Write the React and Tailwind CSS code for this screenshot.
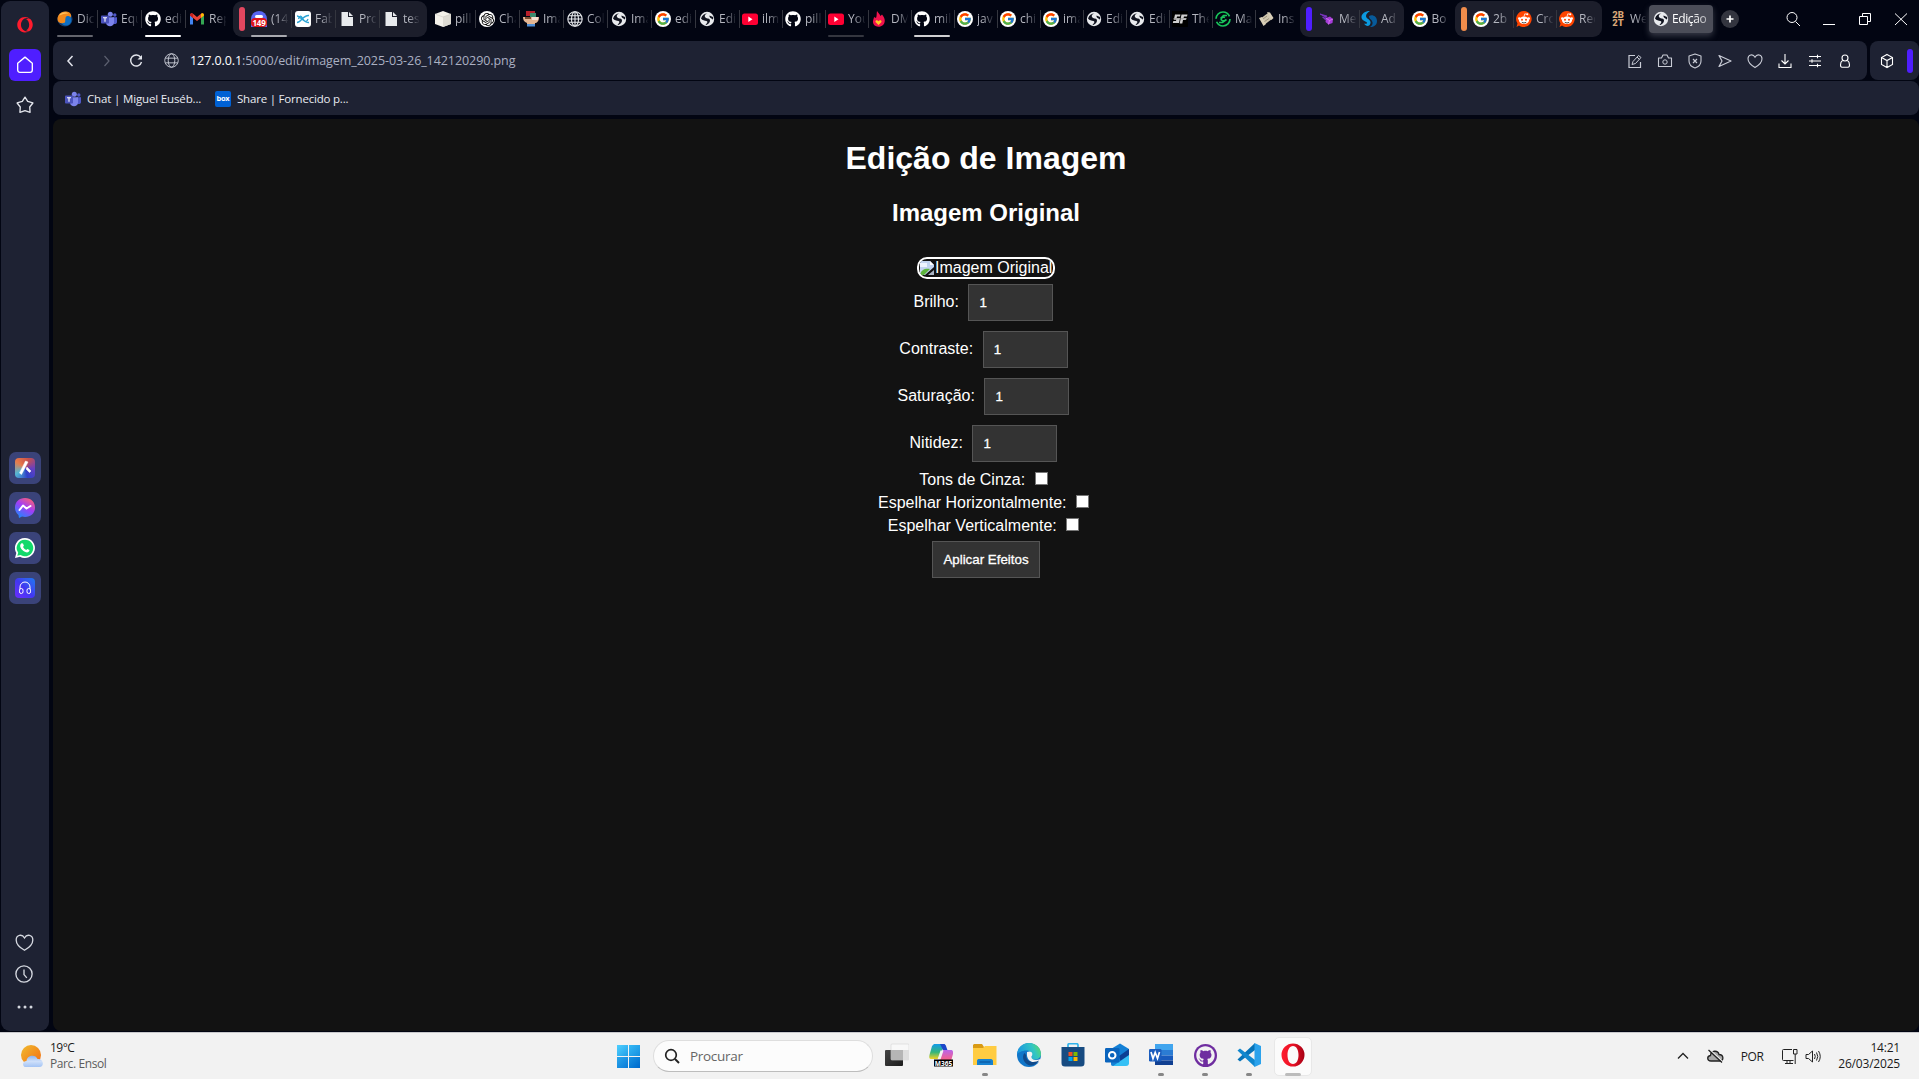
import React from "react";
import { FaGithub, FaOpera } from "react-icons/fa";
import { FcGoogle } from "react-icons/fc";
import { SiOpenai } from "react-icons/si";

const Svg = ({ s = 16, box = 16, children, className = "" }) => (
  <svg width={s} height={s} viewBox={`0 0 ${box} ${box}`} fill="none" className={`shrink-0 ${className}`}>
    {children}
  </svg>
);

/* ---------- favicons ---------- */
const Firefoxish = () => (
  <Svg>
    <circle cx="8" cy="8" r="7.6" fill="#123a6b" />
    <circle cx="9" cy="9" r="5.5" fill="#0d6fc4" />
    <path d="M0.5 8C0.5 3 5 0 9 0.5C14 1 15 4.500 13.500 6.500C12 4.500 9 4.500 8.500 7C8 10 8.500 10 8 11.500C5 13 0.500 12.500 0.500 8Z" fill="#f28a1d" />
    <path d="M2 4.500C4.500 1 9 .5 11.500 2.500C8 2 4.500 3.500 2 4.500Z" fill="#ffc15a" />
  </Svg>
);
const Teams = () => (
  <Svg>
    <circle cx="9.3" cy="3.3" r="2.5" fill="#7b83eb" />
    <circle cx="13.8" cy="4" r="1.7" fill="#5059c9" />
    <path d="M11.5 6.3H16V11C16 13 13.5 13.6 12 12.5Z" fill="#5059c9" />
    <path d="M5 6.3H13V11.5C13 16.5 5 16.5 5 11.5Z" fill="#7b83eb" />
    <rect y="4.5" width="8" height="8" rx=".8" fill="#4b53bc" />
    <path d="M2 6.7H6M4 6.7V10.8" stroke="#fff" strokeWidth="1.1" />
  </Svg>
);
const Github = () => <FaGithub className="size-4 shrink-0 text-white" />;
const Gmail = () => (
  <Svg>
    <path d="M1 4V13.5H4V7" fill="#4285f4" />
    <path d="M12 7V13.5H15V4" fill="#34a853" />
    <path d="M1 4.5C1 2 3 2 4 2.8L8 6L12 2.8C13 2 15 2 15 4.5L8 10Z" fill="#ea4335" />
    <path d="M12 2.8C13 2 15 2 15 4.5L12 7Z" fill="#fbbc04" />
    <path d="M1 4.5C1 3 2 2 4 2.8V7Z" fill="#c5221f" />
  </Svg>
);
const Discord = () => (
  <span className="flex size-4 shrink-0 flex-col items-center justify-end rounded-t-full bg-[#5865f2]">
    <span className="h-[3px] w-2 rounded bg-white" />
    <span className="flex h-[9px] w-4 items-center justify-center rounded-[4px] bg-[#e0151b] font-['Open_Sans',sans-serif] text-[8px] font-bold leading-none tracking-[-0.2px] text-white">149</span>
  </span>
);
const Fabric = () => (
  <Svg>
    <rect width="16" height="16" rx="3" fill="#fff" />
    <path d="M2 5C5 4.500 9 12 14 11.500M2 11.500C6 11.500 8 4 14 4.500M3.500 8C5 4 6 4.500 8 8S12 11 13 8" stroke="#2ba3d4" strokeWidth="1.300" />
  </Svg>
);
const Doc = () => (
  <Svg>
    <path d="M2.500 1H9V6H14V15H2.500Z" fill="#e8eaed" />
    <path d="M10 1L14 5H10Z" fill="#e8eaed" />
  </Svg>
);
const Box3d = () => (
  <Svg>
    <path d="M8 0L16 3V13L8 16L0 13V3Z" fill="#f3f1ea" />
    <path d="M8 6L16 3V13L8 16Z" fill="#dddbd3" />
    <path d="M0 3L8 6L16 3" stroke="#c5c3bc" strokeWidth=".5" />
  </Svg>
);
const Gpt = () => (
  <span className="grid size-4 shrink-0 place-items-center rounded-full bg-white">
    <SiOpenai className="size-[13px] text-black" />
  </span>
);
const Bath = () => (
  <Svg>
    <path d="M3 0H12V5H3Z" fill="#b8202b" />
    <path d="M7 2H13V6H7Z" fill="#3d8b6e" />
    <path d="M0 6H16C16 10 14 12 12 12V15H4V12C1 11 0 9 0 6Z" fill="#e3b592" />
    <path d="M2 6H8V8H2Z" fill="#7a4a2e" />
    <path d="M9 6H15V9H9Z" fill="#f5dfd0" />
    <path d="M4 13H12V15.500H4Z" fill="#4f8fd6" />
  </Svg>
);
const Grid = ({ s = 16, w = 1.1, c = "#e8eaed" }) => (
  <Svg s={s}>
    <circle cx="8" cy="8" r="7.2" stroke={c} strokeWidth={w} />
    <ellipse cx="8" cy="8" rx="3.500" ry="7.200" stroke={c} strokeWidth={w} />
    <path d="M1 8H15M2 4.800H14M2 11.200H14M8 1V15" stroke={c} strokeWidth={w} />
  </Svg>
);
const UrlGlobe = () => (
  <Svg s={15}>
    <circle cx="8" cy="8" r="7.2" stroke="#c9ccd6" />
    <ellipse cx="8" cy="8" rx="3.500" ry="7.200" stroke="#c9ccd6" />
    <path d="M1.500 5.500H14.500M1.500 10.500H14.500" stroke="#c9ccd6" />
  </Svg>
);
const Globe = () => (
  <Svg>
    <circle cx="8" cy="8" r="7.2" fill="#e8eaed" />
    <path d="M8.500 2.500C6 3 5 5 6.500 6.500C8 8 10.500 7 11 9C11.300 11 9.500 13 7.500 14L6.500 13.500C8.500 12 9 10.500 7.500 10C5.500 9.500 3.500 9.500 2 7.500C3 4 5.500 2.500 8.500 2.500ZM10.500 4.500L14 6C14.500 8 14 9 13 8C12 7 10 6.500 10.500 4.500Z" fill="#10131f" />
  </Svg>
);
const Google = () => (
  <span className="grid size-4 shrink-0 place-items-center rounded-full bg-white">
    <FcGoogle className="size-[14px]" />
  </span>
);
const Youtube = () => (
  <Svg>
    <rect y="2.500" width="16" height="11.500" rx="2.500" fill="#f03" />
    <path d="M6.300 5.500L10.500 8.200L6.300 10.900Z" fill="#fff" />
  </Svg>
);
const Flame = () => (
  <Svg>
    <path d="M6 0C7 2 9 3 9.500 5L11 3.500C15 8 14 12 12 14C9 17 4 16 2.500 13C1 10 3 8 3 6L5 7C6 4.500 5.500 2.500 6 0Z" fill="#f0134d" />
    <path d="M7.500 14L4.500 11C4 9 6.500 8.500 7.500 10.200C8.500 8.500 11 9 10.500 11Z" fill="#ffc928" />
  </Svg>
);
const Sf = () => (
  <Svg>
    <rect width="16" height="16" fill="#000" />
    <path d="M3 3.500H8.500L8 5.500H5L4.700 7H8L7 12H.8L1.300 10H4L4.300 8.800H1.800ZM9.500 3.500H15.500L15 5.500H12L11.600 7H14.300L13.800 9H11L10.300 12.500H7.700Z" fill="#cfcfcf" />
    <path d="M1 7.800H15" stroke="#888" strokeWidth=".7" />
  </Svg>
);
const GreenSwirl = () => (
  <Svg>
    <circle cx="8" cy="8" r="7" stroke="#19c55b" strokeWidth="1.700" strokeDasharray="19 3" />
    <path d="M12 4.500L8.500 4.500L5.500 7.500M4 11.500H7.500L11.500 8.500M6 8C6 10 9 10 10 9.500M10 6.500C8.500 5.500 7 6.500 6 8" stroke="#19c55b" strokeWidth="1.600" />
  </Svg>
);
const Scroll = () => (
  <Svg>
    <path d="M2 8L10 2L14 8L6 14Z" fill="#cfc5ae" />
    <path d="M1 7L4 6L8 13L5.500 15ZM9 1L12 1.500L15.500 7L13.500 9Z" fill="#d9cfb8" />
    <path d="M5 8L9 5M6.500 10.500L11 7.500" stroke="#8f8570" strokeWidth=".8" />
  </Svg>
);
const Meteor = () => (
  <Svg>
    <path d="M7 7L11 5.500L14 8L13.500 12L9.500 13.500L6.500 11Z" fill="#a63bd8" />
    <path d="M1 3L8 5L7 6.500ZM3.500 6L7 7.500L6.500 9Z" fill="#7d35c7" stroke="#7d35c7" strokeWidth=".8" />
    <path d="M7 7L10.500 9.500L14 8M10.500 9.500L9.500 13.500" stroke="#e08af5" strokeWidth=".7" />
  </Svg>
);
const Swirl = () => (
  <Svg>
    <path d="M9 0C3 0-1 4 1 8C3 11 6 10 6 12C6 13 4 13 3 12.500C5 16 9 15.500 9.500 12C10 8 5 8 5 5C5 3 7 1 9 0Z" fill="#0b9ae0" />
    <path d="M8 5C11 3 16 5 16 10C16 14 13 16 9 16C12 14 12 12 11 10C10 8 8 8 8 5Z" fill="#075b9b" />
  </Svg>
);
const Reddit = () => (
  <Svg>
    <path d="M8 0A8 8 0 1 1 3 14.500L.5 16L1.500 12.500A8 8 0 0 1 8 0Z" fill="#ff4500" />
    <ellipse cx="8" cy="9.300" rx="5" ry="3.700" fill="#fff" />
    <circle cx="3.300" cy="7.500" r="1.300" fill="#fff" />
    <circle cx="12.700" cy="7.500" r="1.300" fill="#fff" />
    <circle cx="6" cy="8.700" r="1" fill="#ff4500" />
    <circle cx="10" cy="8.700" r="1" fill="#ff4500" />
    <path d="M5.800 11.300Q8 12.700 10.200 11.300" stroke="#222" strokeWidth=".8" />
    <path d="M8 5.600L8.800 2.800L11 3.300" stroke="#fff" strokeWidth=".8" />
    <circle cx="11.300" cy="3.300" r="1" fill="#fff" />
  </Svg>
);
const TwoB = () => (
  <span className="flex size-4 shrink-0 flex-col items-center justify-center font-['Roboto',sans-serif] text-[9.5px] font-black leading-[8px] text-[#d7a676]">
    <span>2B</span>
    <span>2T</span>
  </span>
);

/* ---------- tabs ---------- */
const fade = "[mask-image:linear-gradient(to_right,black_35%,transparent_105%)]";

function Tab({ icon: Icon, text, w = "w-[43px]", line, sep = true }) {
  return (
    <div className={`relative flex h-9 shrink-0 items-center ${w}`}>
      <Icon />
      <span className={`ml-1 w-[17px] overflow-hidden whitespace-nowrap text-[12px] leading-4 text-[#b4b6bf] ${fade}`}>{text}</span>
      {sep && <span className="ml-[2.5px] h-[18px] w-px shrink-0 bg-[#34363f]" />}
      {line && <span className={`absolute bottom-0 left-0 h-[2px] w-9 rounded-sm ${line}`} />}
    </div>
  );
}

const middle = [
  [Box3d, "pill"], [Gpt, "Cha"], [Bath, "Ima"], [Grid, "Col"], [Globe, "Ima"], [Google, "edi"], [Globe, "Edi"],
  [Youtube, "ilm"], [Github, "pill"], [Youtube, "You", "bg-[#34363f]"], [Flame, "DM"], [Github, "mil", "bg-[#d0d0d2]"],
  [Google, "jav"], [Google, "chi"], [Google, "ima"], [Globe, "Edi"], [Globe, "Edi"], [Sf, "The"], [GreenSwirl, "Ma"], [Scroll, "Ins"],
];

function TabStrip() {
  return (
    <div className="flex h-[41px] pt-px">
      <div className="flex w-[184px] shrink-0 pl-1">
        <Tab w="w-11" icon={Firefoxish} text="Dic" line="bg-[#63656d]" />
        <Tab w="w-11" icon={Teams} text="Equ" />
        <Tab w="w-11" icon={Github} text="edi" line="bg-white" />
        <Tab w="w-11" icon={Gmail} text="Rep" sep={false} />
      </div>
      <div className="-ml-[4px] mr-2 flex h-9 w-[194px] shrink-0 items-center rounded-[9px] bg-[#1c1e2b] pl-1.5">
        <span className="mr-1.5 h-6 w-1.5 shrink-0 rounded-full bg-[#e2475f]" />
        <Tab w="w-11" icon={Discord} text="(14" line="bg-[#a9aab0]" />
        <Tab w="w-11" icon={Fabric} text="Fab" />
        <Tab w="w-11" icon={Doc} text="Pro" />
        <Tab w="w-9" icon={Doc} text="tes" sep={false} />
      </div>
      <div className="flex w-[865px] shrink-0">
        {middle.map(([icon, text, line], i) => (
          <Tab key={i} icon={icon} text={text} line={line} w={i < 6 ? "w-11" : "w-[43px]"} sep={i < 19} />
        ))}
      </div>
      <div className="flex h-9 w-[104px] shrink-0 items-center rounded-[9px] bg-[#1c1e2b] pl-1.5">
        <span className="mr-[7px] h-6 w-1.5 shrink-0 rounded-full bg-[#4f1eff]" />
        <Tab w="w-[42px]" icon={Meteor} text="Me" />
        <Tab w="w-9" icon={Swirl} text="Ad" sep={false} />
      </div>
      <div className="ml-[7.5px] w-[43.5px] shrink-0">
        <Tab w="w-10" icon={Google} text="Bo" sep={false} />
      </div>
      <div className="flex h-9 w-[147px] shrink-0 items-center rounded-[9px] bg-[#1c1e2b] pl-1.5">
        <span className="mr-1.5 h-6 w-1.5 shrink-0 rounded-full bg-[#f08c4b]" />
        <Tab w="w-[43px]" icon={Google} text="2b" />
        <Tab w="w-[43px]" icon={Reddit} text="Cro" />
        <Tab w="w-9" icon={Reddit} text="Red" sep={false} />
      </div>
      <div className="ml-2 w-[39px] shrink-0">
        <Tab w="w-9" icon={TwoB} text="We" sep={false} />
      </div>
      <div className="mt-1 flex h-7 w-16 shrink-0 items-center rounded-[4px] bg-[#4b4d58] pl-1 shadow-[0_3px_6px_rgba(120,122,135,0.45)]">
        <Globe />
        <span className="ml-[3px] w-9 overflow-hidden whitespace-nowrap text-[12px] leading-4 tracking-[-0.4px] text-white [mask-image:linear-gradient(to_right,black_60%,rgba(0,0,0,0.5))]">Edição</span>
      </div>
      <div className="ml-2 mt-[9px] grid size-[18px] shrink-0 place-items-center rounded-full bg-[#33353f]">
        <Svg s={10} box={10}><path d="M5 1.500V8.500M1.500 5H8.500" stroke="#fff" strokeWidth="1.700" /></Svg>
      </div>
      <div className="ml-[46px] flex h-9 items-center gap-5 text-white">
        <Svg><circle cx="7" cy="6.500" r="5" stroke="currentColor" /><path d="M10.500 10.500L15 15" stroke="currentColor" /></Svg>
        <Svg><path d="M2 13.500H14" stroke="currentColor" /></Svg>
        <Svg><path d="M2.500 5.500H10.500V13.500H2.500ZM5.500 5.500V2.500H13.500V10.500H10.500" stroke="currentColor" /></Svg>
        <Svg><path d="M2 2.500L14 14M14 2.500L2 14" stroke="currentColor" /></Svg>
      </div>
    </div>
  );
}

/* ---------- toolbar ---------- */
const Heart = ({ s = 16 }) => (
  <Svg s={s}><path d="M8 14.500C5 12.800 1 9.500 1 5.800C1 1.500 6 .5 8 4.200C10 .5 15 1.500 15 5.800C15 9.500 11 12.800 8 14.500Z" stroke="currentColor" strokeWidth="1.100" /></Svg>
);

function Toolbar() {
  return (
    <div className="flex h-[39px] gap-[3px]">
      <div className="flex flex-1 items-center rounded-[8px] bg-[#1e2233] text-[#e3e5ec]">
        <Svg className="ml-[9px]"><path d="M10.500 3L6 8L10.500 13" stroke="currentColor" strokeWidth="1.500" /></Svg>
        <Svg className="ml-[21px] text-[#5c6070]"><path d="M5.500 3L10 8L5.500 13" stroke="currentColor" strokeWidth="1.200" /></Svg>
        <Svg className="ml-[13px]"><path d="M12.700 4.300A5.500 5.500 0 1 0 13.500 9" stroke="currentColor" strokeWidth="1.400" /><path d="M14 2V6.500H9.500Z" fill="currentColor" /></Svg>
        <span className="ml-5 flex"><UrlGlobe /></span>
        <span className="ml-[11px] mt-px whitespace-nowrap text-[12.5px] tracking-[-0.07px] text-[#abb0c2]"><span className="text-white">127.0.0.1</span>:5000/edit/imagem_2025-03-26_142120290.png</span>
        <div className="ml-auto mr-[14px] flex gap-[14px] text-[#c9ccd6]">
          <Svg><path d="M8 2.500H2V14.500H13.500V9" stroke="currentColor" strokeWidth="1.200" /><path d="M5 11.500L6 8.500L11.500 2.500L14 4.500L8.500 10.500ZM10 4L12.500 6.500" stroke="currentColor" /></Svg>
          <Svg><path d="M1.500 5H4.500L6 2H10L11.500 5H14.500V13.500H1.500Z" stroke="currentColor" strokeWidth="1.100" strokeLinejoin="round" /><circle cx="8" cy="9" r="2.200" stroke="currentColor" /></Svg>
          <Svg><path d="M8 1L14 3V8C14 12 11 14 8 15C5 14 2 12 2 8V3Z" stroke="currentColor" strokeWidth="1.100" strokeLinejoin="round" /><path d="M6 6L10 10M10 6L6 10" stroke="currentColor" strokeWidth="1.200" /></Svg>
          <Svg><path d="M2 2.500L14 8L2 13.500L5 8Z" stroke="currentColor" strokeWidth="1.200" strokeLinejoin="round" /></Svg>
          <Heart />
          <Svg className="text-white"><path d="M8 1V10.500M4.500 7.500L8 11L11.500 7.500M2 10.500V14.500H14V10.500" stroke="currentColor" strokeWidth="1.100" /></Svg>
          <Svg className="text-white"><path d="M2 3.500H14M2 8H14M2 12.500H14M10.500 1.800V5.200M5 6.300V9.700M10.500 10.800V14.200" stroke="currentColor" strokeWidth="1.100" /></Svg>
          <Svg className="text-white"><circle cx="8" cy="5" r="3" stroke="currentColor" strokeWidth="1.100" /><path d="M5.500 7.500C3.800 8.500 3.500 10 3.500 12C3.500 13.500 4 14.200 5 14.200H11C12 14.200 12.500 13.500 12.500 12C12.500 10 12.200 8.500 10.500 7.500" stroke="currentColor" strokeWidth="1.100" /></Svg>
        </div>
      </div>
      <div className="flex w-[49px] items-center rounded-[8px] bg-[#1e2233] pl-[9px] text-white">
        <Svg><path d="M8 1.500L13.500 4.500V11.500L8 14.500L2.500 11.500V4.500ZM2.500 4.500L8 7.500L13.500 4.500M8 7.500V14.500" stroke="currentColor" strokeWidth="1.100" /></Svg>
        <span className="ml-3 h-6 w-1.5 rounded-full bg-[#4f1eff]" />
      </div>
    </div>
  );
}

/* ---------- sidebar ---------- */
const Tile = ({ children }) => <div className="grid size-8 place-items-center rounded-[7px] bg-[#3a4379]">{children}</div>;

function Sidebar() {
  return (
    <aside className="ml-px mt-px flex h-[1030px] w-12 shrink-0 flex-col items-center rounded-[9px] bg-[#1e2233] text-[#e3e5ec]">
      <FaOpera className="mt-4 size-4 shrink-0 text-[#ff1b2d]" />
      <div className="mt-4 grid size-8 shrink-0 place-items-center rounded-[6px] bg-[#4f1eff]">
        <Svg s={18}><path d="M1.500 6.500L8 1L14.500 6.500V12.500C14.500 14 13.500 14.500 12.500 14.500H3.500C2.500 14.500 1.500 14 1.500 12.500Z" stroke="#fff" strokeWidth="1.200" strokeLinejoin="round" /></Svg>
      </div>
      <Svg s={18} className="mt-[15px]"><path d="M8 1L10.400 4.800L15 6.200L12.200 9.800L12.500 14.500L8 13L3.500 14.500L3.800 9.800L1 6.200L5.600 4.800Z" stroke="currentColor" strokeWidth="1.200" strokeLinejoin="round" /></Svg>
      <div className="mt-[338px] flex flex-col gap-2">
        <Tile>
          <div className="grid size-5 place-items-center rounded-[4px] bg-[conic-gradient(from_20deg,#c8504a,#6a3fc0,#2e42c8,#54b6d4,#e87b4a,#c8504a)]">
            <Svg s={18} box={18}><path d="M9.500 2L12 3L5.500 15.500L3.500 14ZM11 8L15 12L13.500 13.500L10 10Z" fill="#fff" stroke="#fff" strokeWidth=".5" /></Svg>
          </div>
        </Tile>
        <Tile>
          <Svg s={20} box={20}>
            <defs><linearGradient id="ms" x1="0.8" y1="0" x2="0.2" y2="1"><stop stopColor="#ff6270" /><stop offset=".45" stopColor="#a23df5" /><stop offset="1" stopColor="#1a8bff" /></linearGradient></defs>
            <path d="M10 0C16 0 20 4 20 9.500S16 19 10 19L7 18.500L4 20L3.500 17C1 15 0 12.500 0 9.500C0 4 4 0 10 0Z" fill="url(#ms)" />
            <path d="M4.500 12L8 7.500L11.500 10.500L15.500 8" stroke="#fff" strokeWidth="2" strokeLinejoin="round" strokeLinecap="round" />
          </Svg>
        </Tile>
        <Tile>
          <Svg s={20} box={20}>
            <path d="M10 0A10 10 0 1 1 5 18.700L0 20L1.300 15A10 10 0 0 1 10 0Z" fill="#fff" />
            <path d="M10 1.700A8.300 8.300 0 1 1 5.500 17L2.300 17.700L3.200 14.800A8.300 8.300 0 0 1 10 1.700Z" fill="#12d96b" />
            <path d="M6.800 5.300L8 5.500L8.900 7.800L8 9C9 10.700 10 11.400 11.300 12L12.300 10.900L14.500 12C14.500 14 12.500 14.700 11 14.300C8 13.500 5.500 10.500 5.200 8.300C5.100 6.500 6 5.500 6.800 5.300Z" fill="#fff" />
          </Svg>
        </Tile>
        <Tile>
          <div className="grid size-5 place-items-center rounded-[4px] bg-gradient-to-tr from-[#6a2bff] via-[#4038f0] to-[#1577f2]">
            <Svg s={14} box={14}><path d="M2 8V6A5 5 0 0 1 12 6V8" stroke="#fff" /><rect x="1.500" y="7.500" width="3.500" height="5" rx="1.700" stroke="#fff" /><rect x="9" y="7.500" width="3.500" height="5" rx="1.700" stroke="#fff" /></Svg>
          </div>
        </Tile>
      </div>
      <div className="mt-auto flex flex-col items-center pr-[2px] text-[#d5d8e0]">
        <Heart s={19} />
        <Svg s={18} className="mt-[13px]"><circle cx="8" cy="8" r="7.200" stroke="currentColor" strokeWidth="1.200" /><path d="M8 4V8.500L10.500 11.500" stroke="currentColor" strokeWidth="1.200" /></Svg>
        <Svg s={16} className="mb-4 ml-px mt-4"><circle cx="2" cy="8" r="1.500" fill="currentColor" /><circle cx="8" cy="8" r="1.500" fill="currentColor" /><circle cx="14" cy="8" r="1.500" fill="currentColor" /></Svg>
      </div>
    </aside>
  );
}

/* ---------- page ---------- */
function Field({ label }) {
  return (
    <label className="flex h-[47px] items-center justify-center pr-[5px]">
      <span className="mr-[9.5px] -translate-y-px">{label}</span>
      <input type="text" defaultValue="1" className="h-[37px] w-[85px] border border-[#555] bg-[#333] pl-[10px] text-[13.333px] text-white outline-none [-webkit-text-stroke:0.3px_white]" />
    </label>
  );
}

function Check({ label }) {
  return (
    <label className="flex h-[23px] items-center justify-center pr-[5px]">
      <span className="mr-[9.5px] mt-[2px]">{label}</span>
      <input type="checkbox" className="size-[13px] appearance-none border border-[#767676] bg-white" />
    </label>
  );
}

function Page() {
  return (
    <main className="mt-1 flex h-[912px] flex-col items-center overflow-hidden rounded-[8px] bg-[#121212] font-['Liberation_Sans',Arial,sans-serif] text-[16px] leading-[18px] text-white">
      <h1 className="mt-[21px] text-[32px] font-bold leading-[37px]">Edição de Imagem</h1>
      <h2 className="mt-[22px] text-[24px] font-bold leading-[27px]">Imagem Original</h2>
      <div className="mb-0.5 mt-[31px] flex h-[22px] w-[138px] items-center overflow-hidden whitespace-nowrap rounded-[10px] border-2 border-white">
        <Svg>
          <path d="M1 1H11L15 5V15H1Z" fill="#c3d4f0" />
          <path d="M1 3H8V7H1Z" fill="#eef4ff" />
          <path d="M1 15C2 9 7 8 11 9L5 15Z" fill="#5cb43c" />
          <path d="M15 7L6 15H15Z" fill="#121212" />
          <path d="M9 15L15 10V15Z" fill="#aab4c4" />
          <path d="M11 1V5H15" fill="#fff" />
        </Svg>
        <span>Imagem Original</span>
      </div>
      <form className="flex flex-col items-center" onSubmit={(e) => e.preventDefault()}>
        <div className="-mt-[2px]">
          <Field label="Brilho:" />
          <Field label="Contraste:" />
          <Field label="Saturação:" />
          <Field label="Nitidez:" />
          <Check label="Tons de Cinza:" />
          <Check label="Espelhar Horizontalmente:" />
          <Check label="Espelhar Verticalmente:" />
        </div>
        <button className="mt-[5px] h-[37px] w-[108px] whitespace-nowrap border border-[#555] bg-[#333] text-[13.333px] [-webkit-text-stroke:0.3px_white]">Aplicar Efeitos</button>
      </form>
    </main>
  );
}

/* ---------- taskbar ---------- */
const Cell = ({ children, dot, active }) => (
  <div className="relative grid h-[47px] w-11 shrink-0 place-items-center">
    {active && <span className="absolute left-[3px] top-1 h-[39px] w-[38px] rounded-[5px] border border-[#e8e8e8] bg-[#fbfbfb]" />}
    <span className="relative -mt-0.5">{children}</span>
    {dot && <span className="absolute bottom-[4px] left-[19px] h-[3px] w-1.5 rounded-full bg-[#868686]" />}
    {active && <span className="absolute bottom-[4px] left-[14px] h-[3px] w-4 rounded-full bg-[#bcbcbc]" />}
  </div>
);

const Opera = () => (
  <Svg s={24} box={24}>
    <defs><linearGradient id="op" x1="0" x2="1"><stop stopColor="#ff1b2d" /><stop offset=".5" stopColor="#e81226" /><stop offset="1" stopColor="#a70014" /></linearGradient></defs>
    <path fillRule="evenodd" d="M12 .5A11.500 11.500 0 1 1 12 23.500A11.500 11.500 0 0 1 12 .5ZM12 3C8.500 3 6.500 7 6.500 12S8.500 21 12 21S17.500 17 17.500 12S15.500 3 12 3Z" fill="url(#op)" />
  </Svg>
);

function Taskbar() {
  return (
    <footer className="flex h-[47px] shrink-0 items-center border-t border-[#c9c9cc] bg-[#f2f2f2] text-[#1b1b1b]">
      <div className="flex w-[617px] shrink-0 items-center pl-5">
        <Svg s={24} box={24}>
          <defs><linearGradient id="sun" x1="0" y1="0" x2="1" y2="1"><stop stopColor="#f0bc2f" /><stop offset="1" stopColor="#f36a11" /></linearGradient><linearGradient id="cl" x2="0" y2="1"><stop stopColor="#8ab2ee" /><stop offset=".5" stopColor="#cfe0fa" /><stop offset="1" stopColor="#a4c4f5" /></linearGradient></defs>
          <circle cx="11" cy="11" r="10" fill="url(#sun)" />
          <path d="M6 23C2 23 2 17 6.500 17C7 10.500 16 10 17.500 15C24 14.500 24.500 23 19.500 23Z" fill="url(#cl)" />
        </Svg>
        <div className="ml-[6px] text-[12px] leading-4">
          <div className="tracking-[-0.5px]">19°C</div>
          <div className="tracking-[-0.4px] text-[#5c5c5c]">Parc. Ensol</div>
        </div>
      </div>
      <div className="grid size-[23px] shrink-0 grid-cols-2 gap-px">
        <span className="bg-gradient-to-br from-[#4fd0ff] to-[#1f9fe8]" />
        <span className="bg-gradient-to-br from-[#35b8f5] to-[#1590e0]" />
        <span className="bg-gradient-to-br from-[#2aa7ec] to-[#0a7ad8]" />
        <span className="bg-gradient-to-br from-[#1a93e2] to-[#0068cc]" />
      </div>
      <div className="ml-[13px] mr-[2px] flex h-8 w-[220px] shrink-0 items-center rounded-full border border-[#dedede] border-b-[#bdbdbd] bg-[#fcfcfc] pl-[10px]">
        <Svg><circle cx="7" cy="7" r="5.300" stroke="#222" strokeWidth="1.700" /><path d="M11 11L15 15" stroke="#222" strokeWidth="2" /></Svg>
        <span className="ml-[10px] text-[13.5px] tracking-[-0.3px] text-[#666]">Procurar</span>
      </div>
      <Cell>
        <Svg s={24} box={24}>
          <defs><linearGradient id="tv" x2="1" y2="1"><stop stopColor="#444" /><stop offset="1" stopColor="#1c1c1c" /></linearGradient></defs>
          <rect y="7" width="18" height="16" rx="1" fill="url(#tv)" /><rect x="6" y="1" width="18" height="16" rx="1" fill="#f8f8f8" stroke="#d4d4d4" strokeWidth=".6" /><path d="M6 7H18V17H6Z" fill="#b5b5b5" /><path d="M18 7H24V17H18Z" fill="#dedede" />
        </Svg>
      </Cell>
      <Cell>
        <Svg s={24} box={24}>
          <defs><linearGradient id="ca" x2="0" y2="1"><stop stopColor="#129bea" /><stop offset=".55" stopColor="#35b57a" /><stop offset="1" stopColor="#f5d323" /></linearGradient><linearGradient id="cb" x2="0" y2="1"><stop stopColor="#b965ea" /><stop offset="1" stopColor="#ff5f7c" /></linearGradient></defs>
          <path d="M5 1H16L11 12L9 16H2C0 16 0 14 .5 12L3 3Z" fill="url(#ca)" /><path d="M11 1H15C17 1 17.500 5 18.500 7H14Z" fill="#1d46c9" /><path d="M14 7H22C24 7 24.500 9 24 11L22 18H10Z" fill="url(#cb)" /><path d="M11.500 7.500H14.500L11.500 16.500H8.500Z" fill="#f2f2f2" />
          <rect x="5" y="16.500" width="19" height="7" fill="#000" />
          <text x="14.500" y="22.500" textAnchor="middle" fontFamily="Open Sans, sans-serif" fontSize="6.500" fontWeight="700" fill="#fff">M365</text>
        </Svg>
      </Cell>
      <Cell dot>
        <Svg s={24} box={24}><path d="M1 1H9L11 4V8H0V2Z" fill="#d99a14" /><path d="M0 5H10L12 3H23.500V22H0Z" fill="#ffcc42" /><path d="M4 22V18C4 16.500 5 16 6 16H18C19 16 20 17 20 18V22Z" fill="#1681d0" /><path d="M6.500 19H17.500" stroke="#0b5aa4" strokeWidth="1.300" /></Svg>
      </Cell>
      <Cell>
        <Svg s={24} box={24}>
          <defs><linearGradient id="ea" x1="0" y1=".3" x2="1" y2="0"><stop stopColor="#1a97df" /><stop offset=".6" stopColor="#32c5c3" /><stop offset="1" stopColor="#62dd57" /></linearGradient></defs>
          <circle cx="12" cy="12" r="12" fill="#1176c9" />
          <path d="M0 11C1 4 6 0 12 0C19 0 24 5 24 11C24 15 20 17 16.500 16.500C14 16 14 15 15 13C16 10 13 7.500 9.500 7.500C4.500 7.500 1 10 0 11Z" fill="url(#ea)" />
          <path d="M10 9C15 7 16.500 11 14.500 13.500C14 16.500 18 18 23.500 16L24 19C20 19.500 14 20 12 17C9.500 14 10 11 10 9Z" fill="#f2f2f2" />
          <path d="M7.500 10C4 14 7 21 13 22.500C17 23 20.500 20 22 17.500C18 20 9 20 9 12Z" fill="#114a8b" />
        </Svg>
      </Cell>
      <Cell>
        <Svg s={24} box={24}><path d="M7 5V2C7 1 7.500.7 8.500.7H15.500C16.500.7 17 1 17 2V5" stroke="#31b4ed" strokeWidth="1.700" /><path d="M.5 4H23.500V20C23.500 22.500 22.500 23.500 20 23.500H4C1.500 23.500.5 22.500.5 20Z" fill="#174b81" /><path d="M7.500 9H11.500V13H7.500Z" fill="#f25022" /><path d="M12.500 9H16.500V13H12.500Z" fill="#7fba00" /><path d="M7.500 14H11.500V18H7.500Z" fill="#00a4ef" /><path d="M12.500 14H16.500V18H12.500Z" fill="#ffb900" /></Svg>
      </Cell>
      <Cell>
        <Svg s={24} box={24}><path d="M6 6L15 .5L24 6V20L19 23H8C6.500 23 6 22 6 21Z" fill="#1380d6" /><path d="M14 13L24 6V14L16 20Z" fill="#0b3f94" /><path d="M8 23L24 12V20C24 22 23 23 21 23Z" fill="#35c0f5" /><rect y="5" width="14.500" height="14.500" rx="1.200" fill="#0a64bd" /><circle cx="7.200" cy="12.200" r="3.300" stroke="#fff" strokeWidth="2" /></Svg>
      </Cell>
      <Cell dot>
        <Svg s={24} box={24}><path d="M6 1H24V7H6Z" fill="#41a5ee" /><path d="M6 7H24V12.500H6Z" fill="#2b7cd3" /><path d="M6 12.500H24V17.500H6Z" fill="#185abd" /><path d="M6 17.500H24V22H6Z" fill="#103f91" /><rect y="6" width="12.500" height="12.500" rx="1.200" fill="#1b5dbe" /><path d="M2 9L4 15.500L6.200 9.500L8.500 15.500L10.500 9" stroke="#fff" strokeWidth="1.700" /></Svg>
      </Cell>
      <Cell dot>
        <span className="grid size-[23px] place-items-center rounded-full bg-[#6f2da0]">
          <FaGithub className="size-[19px] text-[#f2f2f2]" />
        </span>
      </Cell>
      <Cell dot>
        <Svg s={24} box={24}><path d="M18 0V7L3 18.500L.5 16.500Z" fill="#0673b8" /><path d="M18 24V17L3 5.500L.5 7.500Z" fill="#1087ce" /><path d="M17.500 0V24L24 21V3Z" fill="#2ba2ec" /></Svg>
      </Cell>
      <Cell active><Opera /></Cell>
      <div className="ml-auto flex items-center pr-[19px]">
        <Svg s={12} box={12}><path d="M1 8.500L6 3.500L11 8.500" stroke="#222" strokeWidth="1.300" /></Svg>
        <Svg s={18} box={18} className="ml-[17px]"><path d="M5 14C1 14 .5 9 4.500 8.500C5 3 12 3 13 7.500C18 7.500 18 14 14 14Z" fill="#a8a8a8" stroke="#222" strokeWidth="1.300" /><path d="M3.500 2.500L17 15" stroke="#f2f2f2" strokeWidth="1.300" /><path d="M2.500 3L16 15.500" stroke="#222" strokeWidth="1.300" /></Svg>
        <span className="ml-[17px] mt-[2px] text-[12px] tracking-[-0.5px]">POR</span>
        <Svg s={17} box={17} className="ml-[18px]"><path d="M11 1.500H2.500Q1.500 1.500 1.500 2.500V11.500Q1.500 12.500 2.500 12.500H12.500M6 12.500V15.500M9 12.500V15.500M4 15.500H12M12.500 1.500H16V6H12.500ZM14.200 6V16" stroke="#222" /></Svg>
        <Svg s={17} box={17} className="ml-[7px]"><path d="M1 6.500H3.500L7.500 3V14L3.500 10.500H1ZM9.500 6Q11 8.500 9.500 11M11.500 4.500Q14 8.500 11.500 12.500M13.500 3Q17 8.500 13.500 14" stroke="#222" /></Svg>
        <div className="ml-[16px] text-right text-[12px] leading-4 tracking-[-0.2px]">
          <div>14:21</div>
          <div>26/03/2025</div>
        </div>
      </div>
    </footer>
  );
}

export default function App() {
  return (
    <div className="flex h-[1079px] w-[1919px] flex-col overflow-hidden bg-[#020512] font-['Open_Sans','Noto_Sans',sans-serif]">
      <div className="flex h-[1032px] shrink-0">
        <Sidebar />
        <div className="ml-1 flex w-[1866px] flex-col">
          <TabStrip />
          <Toolbar />
          <div className="mt-px flex h-[34px] items-center rounded-[8px] bg-[#1e2233] pt-px text-[11.5px] text-[#e9ebf2]">
            <span className="ml-3 flex"><Teams /></span>
            <span className="ml-[6px] w-[115px] whitespace-nowrap tracking-[-0.15px]">Chat | Miguel Euséb...</span>
            <span className="ml-[13px] grid size-4 place-items-center rounded-[2px] bg-[#0061d5] text-[7.5px] font-bold tracking-[-0.3px] text-white">box</span>
            <span className="ml-[6px] whitespace-nowrap tracking-[-0.2px]">Share | Fornecido p...</span>
          </div>
          <Page />
        </div>
      </div>
      <Taskbar />
    </div>
  );
}
